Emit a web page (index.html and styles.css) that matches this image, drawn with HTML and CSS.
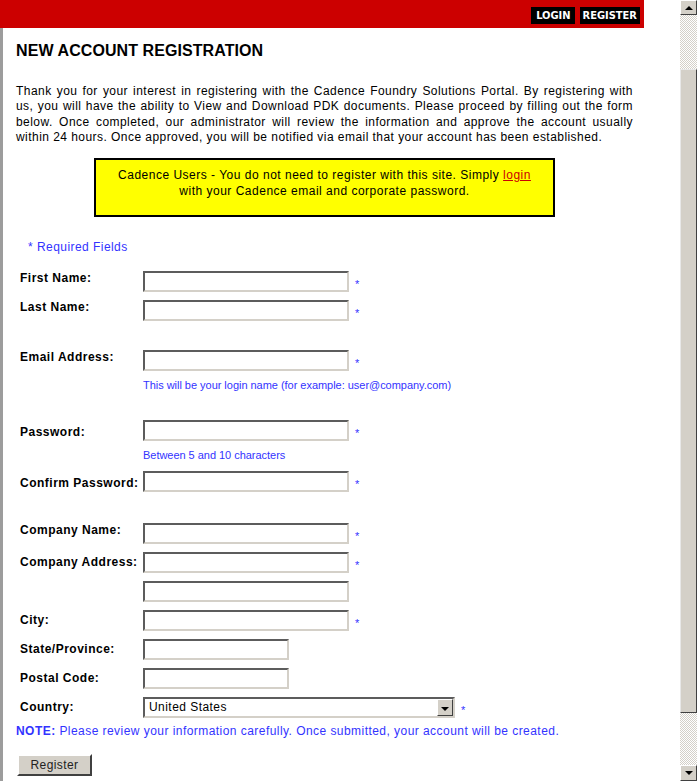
FILE: index.html
```html
<!DOCTYPE html>
<html>
<head>
<meta charset="utf-8">
<title>New Account Registration</title>
<link rel="stylesheet" href="styles.css">
</head>
<body>
<div class="window">
  <div class="page">
    <div class="topbar">
      <a class="navbtn wide" href="#">LOGIN</a>
      <a class="navbtn" href="#">REGISTER</a>
    </div>
    <div class="content">
      <h1 class="title">NEW ACCOUNT REGISTRATION</h1>
      <p class="intro">Thank you for your interest in registering with the Cadence Foundry Solutions Portal. By registering with us, you will have the ability to View and Download PDK documents. Please proceed by filling out the form below. Once completed, our administrator will review the information and approve the account usually within 24 hours. Once approved, you will be notified via email that your account has been established.</p>
      <div class="notice">Cadence Users - You do not need to register with this site. Simply <a href="#" class="loginlink">login</a><br>with your Cadence email and corporate password.</div>
      <div class="required">* Required Fields</div>
      <form class="form">
        <div class="row r-first"><label class="lbl up">First Name:</label><input class="field" type="text"><span class="req">*</span></div>
        <div class="row r-next"><label class="lbl up">Last Name:</label><input class="field" type="text"><span class="req">*</span></div>
        <div class="row r-email"><label class="lbl up">Email Address:</label><input class="field" type="text"><span class="req">*</span></div>
        <div class="hint">This will be your login name (for example: user@company.com)</div>
        <div class="row r-pass"><label class="lbl low">Password:</label><input class="field" type="password"><span class="req">*</span></div>
        <div class="hint">Between 5 and 10 characters</div>
        <div class="row r-confirm"><label class="lbl low">Confirm Password:</label><input class="field" type="password"><span class="req">*</span></div>
        <div class="row r-company"><label class="lbl up">Company Name:</label><input class="field" type="text"><span class="req">*</span></div>
        <div class="row r-next"><label class="lbl">Company Address:</label><input class="field" type="text"><span class="req">*</span></div>
        <div class="row r-next"><span class="lbl"></span><input class="field" type="text"></div>
        <div class="row r-next"><label class="lbl">City:</label><input class="field" type="text"><span class="req">*</span></div>
        <div class="row r-next"><label class="lbl">State/Province:</label><input class="field short" type="text"></div>
        <div class="row r-next"><label class="lbl">Postal Code:</label><input class="field short" type="text"></div>
        <div class="row r-next"><label class="lbl">Country:</label>
          <div class="select"><span class="selval">United States</span><span class="selbtn"><span class="tri"></span></span></div><span class="req">*</span></div>
        <p class="note"><b>NOTE:</b> Please review your information carefully. Once submitted, your account will be created.</p>
        <button class="submit" type="button">Register</button>
      </form>
    </div>
  </div>
  <div class="scrollbar">
    <div class="sbtn"><span class="tri-up"></span></div>
    <div class="track t1"></div>
    <div class="thumb"></div>
    <div class="track t2"></div>
    <div class="sbtn down"><span class="tri-down"></span></div>
  </div>
  <div class="edge"></div>
</div>
</body>
</html>
```
FILE: styles.css
```css
html, body {
  margin: 0;
  padding: 0;
  height: 781px;
  overflow: hidden;
  background: #fff;
}
body {
  font-family: "Liberation Sans", Arial, sans-serif;
  font-size: 12px;
  letter-spacing: 0.45px;
  color: #000;
}
.window {
  display: flex;
  height: 781px;
}
.page {
  width: 680px;
  display: flex;
  flex-direction: column;
}
.topbar {
  width: 644px;
  height: 28px;
  background: #cc0000;
  display: flex;
  justify-content: flex-end;
  align-items: flex-start;
  gap: 5px;
  box-sizing: border-box;
  padding: 7px 4px 0 0;
}
.navbtn {
  display: block;
  background: #000;
  color: #fff;
  font-family: "DejaVu Sans Condensed", "DejaVu Sans", sans-serif;
  font-weight: bold;
  font-size: 11px;
  letter-spacing: 0;
  line-height: 17px;
  height: 17px;
  padding: 0 3px;
  text-decoration: none;
}
.navbtn.wide { padding: 0 4px 0 5px; }
.content {
  flex: 1;
  width: 641px;
  border-left: 3px solid #9c9c9c;
  padding-left: 13px;
  box-sizing: border-box;
}
.title {
  margin: 14px 0 0;
  font-size: 16px;
  line-height: 18px;
  font-weight: bold;
  letter-spacing: 0.08px;
}
.intro {
  margin: 24px 0 0;
  width: 617px;
  text-align: justify;
  line-height: 15.3px;
}
.notice {
  margin: 13px 0 0 78px;
  width: 461px;
  height: 59px;
  box-sizing: border-box;
  border: 2px solid #000;
  background: #ffff00;
  text-align: center;
  padding-top: 7px;
  line-height: 16px;
  letter-spacing: 0.5px;
}
.loginlink {
  color: #cc0000;
}
.required {
  margin: 23px 0 0 12px;
  line-height: 15px;
  color: #3333ff;
}
.form {
  margin: 16px 0 0 4px;
}
.row {
  display: flex;
  align-items: flex-start;
  height: 21px;
}
.r-next { margin-top: 8px; }
.r-email { margin-top: 29px; }
.r-pass { margin-top: 28px; }
.r-confirm { margin-top: 9px; }
.r-company { margin-top: 31px; }
.lbl {
  width: 123px;
  flex: none;
  font-weight: bold;
  line-height: 15px;
  padding-top: 3px;
  letter-spacing: 0.5px;
  white-space: nowrap;
}
.lbl.up { padding-top: 0; }
.lbl.low { padding-top: 5px; }
.field {
  width: 206px;
  height: 21px;
  box-sizing: border-box;
  margin: 0;
  padding: 0 2px;
  border: 2px solid;
  border-color: #5c5c5c #d4d0c8 #d4d0c8 #5c5c5c;
  background: #fff;
  font: 12px "Liberation Sans", Arial, sans-serif;
}
.field.short { width: 146px; }
.req {
  color: #3333ff;
  font-size: 11px;
  line-height: 12px;
  margin-left: 6px;
  padding-top: 7px;
}
.hint {
  margin: 7px 0 0 123px;
  font-size: 11px;
  line-height: 14px;
  letter-spacing: -0.03px;
  color: #3333ff;
}
.select {
  width: 312px;
  height: 21px;
  box-sizing: border-box;
  border: 2px solid;
  border-color: #5c5c5c #d4d0c8 #d4d0c8 #5c5c5c;
  display: flex;
  align-items: stretch;
  background: #fff;
}
.selval {
  flex: 1;
  padding-left: 4px;
  line-height: 17px;
  font-size: 12px;
}
.selbtn {
  width: 16px;
  box-sizing: border-box;
  background: #d4d0c8;
  border: 1px solid;
  border-color: #fff #404040 #404040 #fff;
  display: flex;
  align-items: center;
  justify-content: center;
}
.tri {
  width: 0;
  height: 0;
  border-left: 4px solid transparent;
  border-right: 4px solid transparent;
  border-top: 4px solid #000;
  margin-top: 2px;
}
.note {
  margin: 6px 0 0 -4px;
  line-height: 15px;
  color: #3333ff;
}
.submit {
  display: block;
  margin: 15px 0 0 -3px;
  width: 75px;
  height: 22px;
  padding: 0;
  background: #d4d0c8;
  border: 2px solid;
  border-color: #fff #404040 #404040 #fff;
  font: 12px "Liberation Sans", Arial, sans-serif;
  letter-spacing: 0.4px;
  color: #222;
}
.scrollbar {
  width: 17px;
  display: flex;
  flex-direction: column;
}
.sbtn {
  height: 15px;
  flex: none;
  box-sizing: border-box;
  background: #d4d0c8;
  border: 1px solid;
  border-color: #fff #404040 #404040 #fff;
  display: flex;
  align-items: center;
  justify-content: center;
}
.sbtn.down { height: 16px; }
.tri-up {
  width: 0; height: 0;
  border-left: 4px solid transparent;
  border-right: 4px solid transparent;
  border-bottom: 4px solid #000;
}
.tri-down {
  width: 0; height: 0;
  border-left: 4px solid transparent;
  border-right: 4px solid transparent;
  border-top: 4px solid #000;
}
.track {
  background: repeating-conic-gradient(#d4d0c8 0 25%, #fff 0 50%) 0 0 / 2px 2px;
}
.t1 { height: 54px; flex: none; }
.t2 { flex: 1; }
.thumb {
  height: 644px;
  flex: none;
  box-sizing: border-box;
  background: #d4d0c8;
  border: 1px solid;
  border-color: #e8e8e8 #404040 #404040 #e8e8e8;
}
.edge {
  flex: 1;
  background: #fff;
}
```
